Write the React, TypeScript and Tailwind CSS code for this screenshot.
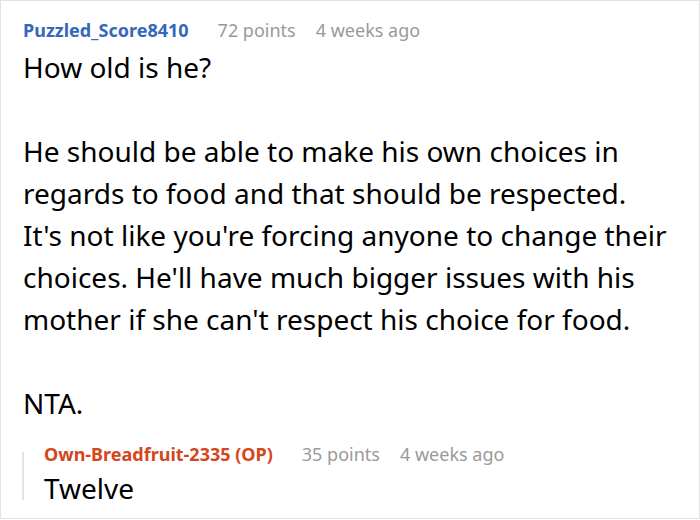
import React from 'react';

interface CommentHeaderProps {
  author: string;
  points: number;
  age: string;
  op?: boolean;
}

function CommentHeader({ author, points, age, op }: CommentHeaderProps) {
  return (
    <div className="flex items-baseline h-[24px] text-[18px] leading-[24px] whitespace-nowrap">
      <span
        className={`font-bold mr-[29px] ${op ? 'text-[#d4461c]' : 'text-[#3468b8]'}`}
      >
        {author}
      </span>
      <span className="text-[#999999] mr-[20px]">{points} points</span>
      <span className="text-[#999999]">{age}</span>
    </div>
  );
}

export default function App() {
  return (
    <div
      className="w-[700px] h-[519px] border border-[#e2e2e2] bg-white pl-[21px] pt-[17px] text-black overflow-hidden"
      style={{ fontFamily: '"Noto Sans", "Open Sans", sans-serif' }}
    >
      {/* main comment */}
      <div className="pl-px">
        <CommentHeader author="Puzzled_Score8410" points={72} age="4 weeks ago" />
        <div className="mt-[4px] text-[28px] leading-[42px] whitespace-nowrap">
          <p className="mb-[42px]">How old is he?</p>
          <p className="mb-[42px]">
            He should be able to make his own choices in
            <br />
            regards to food and that should be respected.
            <br />
            It's not like you're forcing anyone to change their
            <br />
            choices. He'll have much bigger issues with his
            <br />
            mother if she can't respect his choice for food.
          </p>
          <p>NTA.</p>
        </div>
      </div>

      {/* reply */}
      <div className="mt-[17.5px] flex">
        <div className="w-[2px] bg-[#e3e3e3] mt-[10px] mb-[5.5px]" />
        <div className="ml-[20px]">
          <CommentHeader author="Own-Breadfruit-2335 (OP)" points={35} age="4 weeks ago" op />
          <div className="mt-[4px] text-[28px] leading-[36px]">Twelve</div>
        </div>
      </div>
    </div>
  );
}
